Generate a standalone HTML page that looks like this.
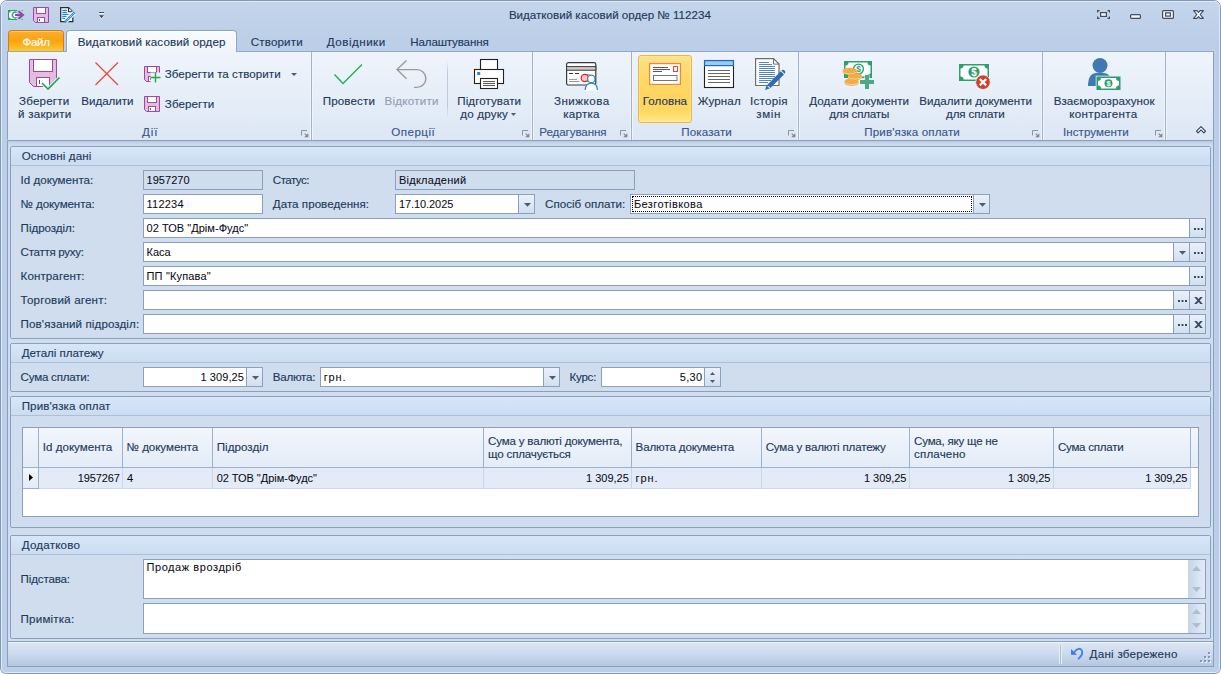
<!DOCTYPE html>
<html lang="uk">
<head>
<meta charset="utf-8">
<title>Видатковий касовий ордер № 112234</title>
<style>
*{box-sizing:border-box;margin:0;padding:0}
html,body{width:1221px;height:674px;overflow:hidden;background:#fff}
body{font-family:"Liberation Sans",sans-serif;font-size:11.6px;color:#1e395b;position:relative}
.win,.win *{position:absolute}
.win{left:0;top:0;width:1221px;height:674px;background:linear-gradient(#c4d5eb 0,#bccfe8 40px,#bccfe8 100%);border-radius:7px 7px 6px 6px;overflow:hidden}
.win:before{content:"";position:absolute;left:0;top:0;right:0;bottom:0;border:1px solid #8697b2;border-radius:7px 7px 6px 6px;z-index:5}
.win:after{content:"";position:absolute;left:1px;top:1px;right:1px;bottom:1px;border:1px solid #dfeaf7;border-radius:6px 6px 5px 5px;z-index:5}
.t{white-space:nowrap;line-height:14px;height:14px;-webkit-text-stroke:0.14px currentColor}
.c{text-align:center}
.r{text-align:right}
svg{overflow:visible}
#title{left:0;top:8px;width:1219px;text-align:center;color:#1e395b}
#filetab{left:8px;top:30px;width:56px;height:21px;border:1px solid #dc7a12;border-bottom:none;border-radius:4px 4px 0 0;background:linear-gradient(#f9b030 0%,#f8a311 45%,#fab51e 75%,#fdcb2c 100%);box-shadow:inset 0 1px 0 rgba(255,225,150,.6)}
#acttab{left:66px;top:30px;width:171px;height:22px;border:1px solid #8fa6c6;border-bottom:none;border-radius:4px 4px 0 0;background:linear-gradient(#f8fbfe,#f0f5fb);box-shadow:inset 1px 1px 0 #fff,inset -1px 0 0 #fff}
#ribbon{left:7px;top:51px;width:1207px;height:90px;border:1px solid #8ba0bc;border-top-color:#93a8c6;border-radius:0 0 2px 2px;background:linear-gradient(#eff4fb 0%,#e6eef8 50%,#dce7f4 100%)}
.gsep{top:52px;width:3px;height:88px;margin-left:-1px;background:linear-gradient(90deg,#f0f5fb 0,#f0f5fb 1px,#a0b3ce 1px,#a0b3ce 2px,#f0f5fb 2px,#f0f5fb 3px)}
.bsep{width:1px;background:linear-gradient(rgba(180,196,218,0),#bccbe0 20%,#bccbe0 80%,rgba(180,196,218,0))}
.gcap{color:#3a5590}
.dis{color:#929fb3}
.hot{border:1px solid #e8b84b;border-radius:3px;background:linear-gradient(#fde08a 0%,#fed969 30%,#ffd55f 65%,#ffd962 85%,#ffe88c 100%);box-shadow:inset 0 0 0 1px rgba(255,236,170,.5)}
#form{left:7px;top:141px;width:1207px;height:500px;background:linear-gradient(#b7c7de 0,#c6d5e9 2px,#cfddee 5px);border-left:1px solid #8ba0bc;border-right:1px solid #8ba0bc}
.grp{border:1px solid #8ba0bc;border-radius:2px;background:#cfddee}
.hd{left:0;top:0;right:0;height:19px;background:linear-gradient(#d8e6f8,#cbdcf1);border-bottom:1px solid #aebfd9}
.fld{border:1px solid #8ba0bc;background:#fff;color:#000}
.fld.ro{background:#cfddee}
.btn{top:0;bottom:0;border-left:1px solid #8ba0bc;background:linear-gradient(#eaf1fa,#d3dfef)}
#status{left:7px;top:641px;width:1207px;height:26px;border:1px solid #8ba0bc;background:linear-gradient(#dde8f5 0%,#cddbee 45%,#b5c7df 100%);box-shadow:inset 0 1px 0 #eef4fb}
.gh{top:0;height:40px;font-size:11px;border-right:1px solid #9db0cc;border-bottom:1px solid #9db0cc;background:linear-gradient(#f2f6fc,#e3ecf8);color:#1e395b}
.gc{top:40px;height:21px;border-right:1px solid #c9d6e8;border-bottom:1px solid #c9d6e8;background:#e2ebf7;color:#000}
.v{color:#0a0a14;-webkit-text-stroke:0.05px currentColor}
</style>
</head>
<body>
<div class="win">
<div class="t " style="left:508.9px;top:8px;letter-spacing:0.00px;">Видатковий касовий ордер № 112234</div>
<svg style="left:8px;top:10px" width="16" height="10" viewBox="0 0 16 10"><rect x="0" y="0" width="9.200" height="10" fill="#2f9e6e"/><path d="M1.100 2.600Q2.800 2.600 2.800 1.100H9.200V8.900H2.800Q2.800 7.400 1.100 7.400Z" fill="#fff"/><path d="M8.800 2.500A2.900 2.900 0 1 0 8.800 7.500" fill="none" stroke="#2f9e6e" stroke-width="1.400"/><rect x="13.500" y="0" width="1.200" height="1.200" fill="#2f9e6e" opacity="0.800"/><rect x="13.500" y="8.800" width="1.200" height="1.200" fill="#2f9e6e" opacity="0.800"/><path d="M7 5H13.500" stroke="#8e44ad" stroke-width="1.900"/><path d="M10.400 1.300L15 5L10.400 8.700" fill="none" stroke="#8e44ad" stroke-width="2"/></svg>
<svg style="left:33px;top:7px" width="16" height="16" viewBox="0 0 16 16"><path d="M0.5 0.5H15.5V15.5H2.5L0.5 13.5Z" fill="#e2bde0" stroke="#a046a3"/><rect x="3.5" y="0.5" width="9" height="6" fill="#fff" stroke="#a046a3"/><rect x="4.5" y="10.5" width="7" height="5" fill="#fff" stroke="#a046a3"/><rect x="6" y="12" width="1" height="2" fill="#555"/></svg>
<svg style="left:60px;top:7px" width="16" height="16" viewBox="0 0 16 16"><path d="M0.700 0.700H8.500L12.800 4.800V14.600H0.700Z" fill="#fff" stroke="#2b2b2b" stroke-width="1.250"/><path d="M8.500 0.700V4.800H12.800" fill="#e8e8e8" stroke="#2b2b2b" stroke-width="1.100"/><path d="M2.300 3.400H7M2.300 5.400H7M2.300 7.400H8.500M2.300 9.400H6.500M2.300 11.400H5" stroke="#1e88d2" stroke-width="1.100"/><path d="M14.500 5.500L5.600 14.400" stroke="#fff" stroke-width="4.400"/><path d="M14.600 5.400L5.800 14.200" stroke="#2e8fdb" stroke-width="2.500" fill="none"/><path d="M6.700 15.100L4.900 13.300L4.200 15.800Z" fill="#2e8fdb"/><path d="M13.800 6.200L6.200 13.800" stroke="#fff" stroke-width="0.800" stroke-dasharray="1.300 0.900"/></svg>
<svg style="left:99px;top:12px" width="5" height="8" viewBox="0 0 5 8"><rect x="0" y="0" width="5" height="1" fill="#4a4f58"/><rect x="0" y="1" width="5" height="1" fill="#fff" opacity="0.750"/><path d="M-0.300 4.100H5.300L2.500 7.200Z" fill="#fff" opacity="0.700"/><path d="M0 3.200H5L2.500 6.200Z" fill="#454a52"/></svg>
<svg style="left:1097px;top:10px" width="13" height="9" viewBox="0 0 13 9"><path d="M2.500 0.600H0.600V2.500M10.500 0.600H12.400V2.500M2.500 8.400H0.600V6.500M10.500 8.400H12.400V6.500" fill="none" stroke="#454b5e" stroke-width="1.200"/><rect x="3.600" y="2.600" width="5.800" height="3.800" fill="#f4f8fc" stroke="#454b5e" stroke-width="1.200"/></svg>
<svg style="left:1130px;top:14px" width="11" height="5" viewBox="0 0 11 5"><rect x="0.600" y="0.600" width="9.800" height="3.800" rx="1" fill="#f4f8fc" stroke="#454b5e" stroke-width="1.200"/></svg>
<svg style="left:1162px;top:10px" width="12" height="9" viewBox="0 0 12 9"><rect x="0.600" y="0.600" width="10.800" height="7.800" rx="1" fill="#f4f8fc" stroke="#454b5e" stroke-width="1.200"/><rect x="3.600" y="2.900" width="4.800" height="3.200" fill="#f4f8fc" stroke="#454b5e" stroke-width="1.200"/></svg>
<svg style="left:1193px;top:10px" width="11" height="9" viewBox="0 0 11 9"><path d="M0.600 0.600H4L5.500 2.500L7 0.600H10.400L7.200 4.500L10.400 8.400H7L5.500 6.500L4 8.400H0.600L3.800 4.500Z" fill="#f4f8fc" stroke="#454b5e" stroke-width="1.150" stroke-linejoin="round"/></svg>
<div id="filetab"></div>
<div class="t " style="left:22.5px;top:34.5px;letter-spacing:-0.33px;color:#fff">Файл</div>
<div id="ribbon"></div>
<div id="acttab"></div>
<div class="t " style="left:77.7px;top:35px;letter-spacing:0.11px;">Видатковий касовий ордер</div>
<div class="t " style="left:250.8px;top:35px;letter-spacing:0.14px;">Створити</div>
<div class="t " style="left:326.8px;top:35px;letter-spacing:0.50px;">Довідники</div>
<div class="t " style="left:410.3px;top:35px;letter-spacing:-0.16px;">Налаштування</div>
<div class="gsep" style="left:311px"></div>
<div class="gsep" style="left:532px"></div>
<div class="gsep" style="left:631px"></div>
<div class="gsep" style="left:798px"></div>
<div class="gsep" style="left:1042px"></div>
<div class="gsep" style="left:1165px"></div>
<div class="t gcap" style="left:142.1px;top:125px;letter-spacing:0.85px;">Дії</div>
<div class="t gcap" style="left:391.3px;top:125px;letter-spacing:0.45px;">Оперції</div>
<div class="t gcap" style="left:539.3px;top:125px;letter-spacing:-0.09px;">Редагування</div>
<div class="t gcap" style="left:681.3px;top:125px;letter-spacing:0.11px;">Показати</div>
<div class="t gcap" style="left:864.3px;top:125px;letter-spacing:0.12px;">Прив'язка оплати</div>
<div class="t gcap" style="left:1063.0px;top:125px;letter-spacing:0.05px;">Інструменти</div>
<svg style="left:301px;top:130px" width="8" height="8" viewBox="0 0 8 8"><path d="M0.500 5.500V0.500H6" fill="none" stroke="#8d93a3"/><path d="M7.300 3.200V7.300H3.200Z" fill="#808697"/><path d="M3.700 3.700L6 6" stroke="#808697" stroke-width="1.100"/></svg>
<svg style="left:522px;top:130px" width="8" height="8" viewBox="0 0 8 8"><path d="M0.500 5.500V0.500H6" fill="none" stroke="#8d93a3"/><path d="M7.300 3.200V7.300H3.200Z" fill="#808697"/><path d="M3.700 3.700L6 6" stroke="#808697" stroke-width="1.100"/></svg>
<svg style="left:620px;top:130px" width="8" height="8" viewBox="0 0 8 8"><path d="M0.500 5.500V0.500H6" fill="none" stroke="#8d93a3"/><path d="M7.300 3.200V7.300H3.200Z" fill="#808697"/><path d="M3.700 3.700L6 6" stroke="#808697" stroke-width="1.100"/></svg>
<svg style="left:788px;top:130px" width="8" height="8" viewBox="0 0 8 8"><path d="M0.500 5.500V0.500H6" fill="none" stroke="#8d93a3"/><path d="M7.300 3.200V7.300H3.200Z" fill="#808697"/><path d="M3.700 3.700L6 6" stroke="#808697" stroke-width="1.100"/></svg>
<svg style="left:1032px;top:130px" width="8" height="8" viewBox="0 0 8 8"><path d="M0.500 5.500V0.500H6" fill="none" stroke="#8d93a3"/><path d="M7.300 3.200V7.300H3.200Z" fill="#808697"/><path d="M3.700 3.700L6 6" stroke="#808697" stroke-width="1.100"/></svg>
<svg style="left:1155px;top:130px" width="8" height="8" viewBox="0 0 8 8"><path d="M0.500 5.500V0.500H6" fill="none" stroke="#8d93a3"/><path d="M7.300 3.200V7.300H3.200Z" fill="#808697"/><path d="M3.700 3.700L6 6" stroke="#808697" stroke-width="1.100"/></svg>
<svg style="left:1195.5px;top:125.5px" width="10" height="8" viewBox="0 0 10 8"><path d="M0.500 5.200L5 0.700L9.500 5.200L7.900 6.800L5 3.900L2.100 6.800Z" fill="#fff" stroke="#2c3e5c" stroke-width="1.100" stroke-linejoin="round"/></svg>
<svg style="left:29px;top:59px" width="28" height="28" viewBox="0 0 28 28"><path d="M0.5 0.5H27.5V27.5H4.5L0.5 23.5Z" fill="#e2bde0" stroke="#a046a3"/><rect x="4.5" y="0.5" width="19" height="12" fill="#fff" stroke="#a046a3"/><rect x="7.5" y="18.5" width="13" height="9" fill="#fff" stroke="#a046a3"/><rect x="10" y="21" width="1" height="4" fill="#555"/><path d="M15.500 26.500L19 30L30.500 18.500L31 24L28.500 29H20" fill="#e9f0f9" stroke="#e9f0f9" stroke-width="3.400" stroke-linejoin="round"/><path d="M13 24L19 30" fill="none" stroke="#f4f7fc" stroke-width="3.400"/><path d="M13 24L19 30L30.500 18.500" fill="none" stroke="#1fa84d" stroke-width="1.600"/></svg>
<div class="t " style="left:19.0px;top:94px;letter-spacing:0.19px;">Зберегти</div>
<div class="t " style="left:18.0px;top:107px;letter-spacing:0.26px;">й закрити</div>
<svg style="left:95px;top:62px" width="23" height="23" viewBox="0 0 23 23"><path d="M0.500 0.500L23 23M23 0.500L0.500 23" stroke="#e9453c" stroke-width="1.200" fill="none"/></svg>
<div class="t " style="left:81.3px;top:94px;letter-spacing:-0.03px;">Видалити</div>
<svg style="left:144px;top:66px" width="16" height="16" viewBox="0 0 16 16"><path d="M0.5 0.5H15.5V15.5H2.5L0.5 13.5Z" fill="#e2bde0" stroke="#a046a3"/><rect x="3.5" y="0.5" width="9" height="6" fill="#fff" stroke="#a046a3"/><rect x="4.5" y="10.5" width="7" height="5" fill="#fff" stroke="#a046a3"/><rect x="6" y="12" width="1" height="2" fill="#555"/><rect x="6.500" y="6.500" width="10" height="10" fill="#e9f0f9"/><path d="M11.500 6.500V16.500M6.500 11.500H16.500" stroke="#1fa84d" stroke-width="1.400"/></svg>
<div class="t " style="left:164.8px;top:67px;letter-spacing:0.03px;">Зберегти та створити</div>
<svg style="left:291px;top:73px" width="6" height="3" viewBox="0 0 6 3"><path d="M0 0H6L3 3Z" fill="#4a5b75"/></svg>
<svg style="left:144px;top:96px" width="16" height="16" viewBox="0 0 16 16"><path d="M0.5 0.5H15.5V15.5H2.5L0.5 13.5Z" fill="#e2bde0" stroke="#a046a3"/><rect x="3.5" y="0.5" width="9" height="6" fill="#fff" stroke="#a046a3"/><rect x="4.5" y="10.5" width="7" height="5" fill="#fff" stroke="#a046a3"/><rect x="6" y="12" width="1" height="2" fill="#555"/></svg>
<div class="t " style="left:164.8px;top:97px;letter-spacing:0.09px;">Зберегти</div>
<svg style="left:334px;top:64px" width="28" height="20" viewBox="0 0 28 20"><path d="M0.500 10.500L9 19.500L28 0.500" fill="none" stroke="#22b14c" stroke-width="1.400"/></svg>
<div class="t " style="left:322.7px;top:94px;letter-spacing:0.14px;">Провести</div>
<svg style="left:396px;top:60px" width="31" height="28" viewBox="0 0 31 28"><path d="M10.500 0.500L1 9.600L10.500 18.700M1 9.600H21A8.900 8.900 0 0 1 21 27.400H18" fill="none" stroke="#9b9b9b" stroke-width="1.400"/></svg>
<div class="t dis" style="left:384.6px;top:94px;letter-spacing:0.23px;">Відкотити</div>
<div class="bsep" style="left:447px;top:61px;height:57px"></div>
<svg style="left:474px;top:59px" width="30" height="30" viewBox="0 0 30 30"><rect x="6.500" y="0.500" width="17" height="11" fill="#fff" stroke="#222" stroke-width="1.100"/><rect x="0.500" y="10.500" width="29" height="14" fill="#fff" stroke="#222" stroke-width="1.100"/><rect x="6.500" y="19.500" width="17" height="10" fill="#fff" stroke="#222" stroke-width="1.100"/><path d="M9 22.500H21M9 24.500H21M9 26.500H21" stroke="#444" stroke-width="0.900"/><rect x="3.200" y="13" width="3" height="3" fill="#2e86c8"/></svg>
<div class="t " style="left:457.3px;top:94px;letter-spacing:0.06px;">Підготувати</div>
<div class="t " style="left:460.3px;top:107px;letter-spacing:0.18px;">до друку</div>
<svg style="left:511px;top:113px" width="5" height="3" viewBox="0 0 5 3"><path d="M0 0H5L2.500 3Z" fill="#4a5b75"/></svg>
<svg style="left:566px;top:62px" width="32" height="29" viewBox="0 0 32 29"><rect x="0.600" y="0.600" width="29.200" height="22.400" rx="1.800" fill="#fff" stroke="#3a3a3a" stroke-width="1.200"/><rect x="0.600" y="4.600" width="29.200" height="3.600" fill="#cfcdcb" stroke="#3a3a3a" stroke-width="1"/><path d="M3 11.500H7M9 11.500H13" stroke="#333" stroke-width="1.100"/><path d="M3 17.400H11M3 19.500H13" stroke="#888" stroke-width="0.900"/><circle cx="21.300" cy="16" r="3.500" fill="#fbe3c8" stroke="#ee8a2a" stroke-width="1.100"/><circle cx="18.800" cy="16" r="3.600" fill="#f6c6c6" stroke="#e0262d" stroke-width="1.200"/><path d="M18.800 28.500V27.500Q19.300 21 25.300 21Q31.300 21 31.800 27.500V28.500Z" fill="#fff"/><path d="M19.200 28Q19.500 21.200 25.300 21.200Q31.100 21.200 31.400 28" fill="none" stroke="#2a8ad4" stroke-width="1.250"/><circle cx="25.300" cy="16.900" r="3.700" fill="#fff" stroke="#2a8ad4" stroke-width="1.250"/></svg>
<div class="t " style="left:553.9px;top:94px;letter-spacing:0.50px;">Знижкова</div>
<div class="t " style="left:563.3px;top:107px;letter-spacing:0.22px;">картка</div>
<div class="hot" style="left:638px;top:55px;width:54px;height:68px"></div>
<svg style="left:649px;top:63px" width="32" height="22" viewBox="0 0 32 22"><rect x="0.600" y="0.600" width="30.800" height="20.800" fill="#fff" stroke="#f0853a" stroke-width="1.200"/><path d="M4 4.500H19M4 6.500H21M4 8.500H13" stroke="#444" stroke-width="0.900"/><rect x="24.500" y="3.500" width="4" height="5" fill="#fff" stroke="#e8413a" stroke-width="1"/><rect x="4.500" y="12.500" width="23.500" height="5" fill="#fff" stroke="#777" stroke-width="1"/></svg>
<div class="t " style="left:642.7px;top:94px;letter-spacing:0.05px;">Головна</div>
<svg style="left:704px;top:60px" width="30" height="28" viewBox="0 0 30 28"><rect x="0.500" y="0.500" width="29" height="27" fill="#fff" stroke="#222" stroke-width="1.100"/><rect x="0.600" y="0.600" width="28.800" height="5" fill="#9ccdf0" stroke="#1a6fc0" stroke-width="1.200"/><path d="M4 10.500H26M4 13.500H26M4 16.500H26M4 19.500H26M4 22.500H26" stroke="#555" stroke-width="0.900"/></svg>
<div class="t " style="left:697.7px;top:94px;letter-spacing:0.13px;">Журнал</div>
<svg style="left:755px;top:58px" width="31" height="33" viewBox="0 0 31 33"><path d="M0.600 0.600H18.500L24 6.100V27.500H0.600Z" fill="#fff" stroke="#6d6d6d" stroke-width="1.200"/><path d="M18.500 0.600V6.100H24" fill="none" stroke="#6d6d6d" stroke-width="1"/><path d="M4 4.500H14M4 6.500H17M4 8.500H20M4 10.500H20M4 12.500H20M4 14.500H20M4 16.500H20M4 18.500H20M4 20.500H20M4 22.500H16M4 24.500H13" stroke="#3b78c0" stroke-width="0.900"/><path d="M25.800 13.200L29 16.400L15.500 29.900L12.300 26.700Z" fill="#2e6db4"/><path d="M11.600 27.500L14.700 30.600L10 32Z" fill="#2e6db4"/><path d="M26.400 12.600A1.800 1.800 0 0 1 29.600 15.800Z" fill="#2e6db4"/></svg>
<div class="t " style="left:750.0px;top:94px;letter-spacing:0.28px;">Історія</div>
<div class="t " style="left:756.3px;top:107px;letter-spacing:0.63px;">змін</div>
<svg style="left:843px;top:60px" width="32" height="30" viewBox="0 0 32 30"><g transform="translate(1,1)"><rect x="0" y="0" width="28" height="17" fill="#2f9e6e"/><path d="M1.5 4.5Q4.5 4.5 4.5 1.5H23.5Q23.5 4.5 26.5 4.5V12.5Q23.5 12.5 23.5 15.5H4.5Q4.5 12.5 1.5 12.5Z" fill="#fff"/><circle cx="14.5" cy="8" r="4.8999999999999995" fill="#fff" stroke="#2f9e6e" stroke-width="1.400"/><text x="14.5" y="11.06" font-family="Liberation Sans,sans-serif" font-weight="bold" font-size="8.5" fill="#2f9e6e" text-anchor="middle">$</text></g><ellipse cx="8.6" cy="23.1" rx="7" ry="2.600" fill="#eda035"/><rect x="1.5999999999999996" y="21.6" width="14" height="1.500" fill="#eda035"/><path d="M1.7999999999999998 22.5A7 2.600 0 0 0 15.399999999999999 22.5" fill="none" stroke="#fff" stroke-width="0.700" opacity="0.900"/><ellipse cx="8.6" cy="21.0" rx="7" ry="2.500" fill="#f2ad47"/><ellipse cx="11.9" cy="17.7" rx="7" ry="2.600" fill="#eda035"/><rect x="4.9" y="16.2" width="14" height="1.500" fill="#eda035"/><path d="M5.1000000000000005 17.099999999999998A7 2.600 0 0 0 18.7 17.099999999999998" fill="none" stroke="#fff" stroke-width="0.700" opacity="0.900"/><ellipse cx="11.9" cy="15.6" rx="7" ry="2.500" fill="#f2ad47"/><ellipse cx="6.8" cy="12.4" rx="7" ry="2.600" fill="#eda035"/><rect x="-0.20000000000000018" y="10.9" width="14" height="1.500" fill="#eda035"/><path d="M0.0 11.8A7 2.600 0 0 0 13.6 11.8" fill="none" stroke="#fff" stroke-width="0.700" opacity="0.900"/><ellipse cx="6.8" cy="10.3" rx="7" ry="2.500" fill="#f2ad47"/><path d="M21.500 14.500H26.500V19.500H31.500V24.500H26.500V29.500H21.500V24.500H16.500V19.500H21.500Z" fill="#eaf1f9"/><path d="M22 15H26V20H31V24H26V29H22V24H17V20H22Z" fill="#4aab82"/></svg>
<div class="t " style="left:809.3px;top:94px;letter-spacing:0.06px;">Додати документи</div>
<div class="t " style="left:829.3px;top:107px;letter-spacing:-0.19px;">для сплаты</div>
<svg style="left:959px;top:64px" width="32" height="26" viewBox="0 0 32 26"><rect x="0" y="0" width="30" height="17" fill="#2f9e6e"/><path d="M1.5 4.5Q4.5 4.5 4.5 1.5H25.5Q25.5 4.5 28.5 4.5V12.5Q25.5 12.5 25.5 15.5H4.5Q4.5 12.5 1.5 12.5Z" fill="#fff"/><circle cx="15" cy="8" r="5.6" fill="#2f9e6e"/><text x="15" y="11.6" font-family="Liberation Sans,sans-serif" font-weight="bold" font-size="10" fill="#fff" text-anchor="middle">$</text><circle cx="24" cy="18.200" r="7.300" fill="#d0402b" stroke="#e9f0f9" stroke-width="0.800"/><path d="M20.800 15L27.200 21.400M27.200 15L20.800 21.400" stroke="#fff" stroke-width="2.200"/></svg>
<div class="t " style="left:919.3px;top:94px;letter-spacing:0.02px;">Видалити документи</div>
<div class="t " style="left:946.1px;top:107px;letter-spacing:-0.14px;">для сплати</div>
<svg style="left:1088px;top:58px" width="33" height="33" viewBox="0 0 33 33"><circle cx="12" cy="7.500" r="7.500" fill="#3f78b5"/><path d="M0 28Q0 15 9 15H15Q24 15 24 28Z" fill="#3f78b5"/><g transform="translate(8.500,18.500)"><rect x="-0.800" y="-0.800" width="25.600" height="15.100" fill="#e3ecf7"/><rect x="0" y="0" width="24" height="13.5" fill="#2f9e6e"/><path d="M1.5 4.5Q4.5 4.5 4.5 1.5H19.5Q19.5 4.5 22.5 4.5V9.0Q19.5 9.0 19.5 12.0H4.5Q4.5 9.0 1.5 9.0Z" fill="#fff"/><circle cx="12" cy="6.75" r="4" fill="#2f9e6e"/><text x="12" y="9.45" font-family="Liberation Sans,sans-serif" font-weight="bold" font-size="7.5" fill="#fff" text-anchor="middle">$</text></g></svg>
<div class="t " style="left:1053.7px;top:94px;letter-spacing:0.04px;">Взаєморозрахунок</div>
<div class="t " style="left:1069.3px;top:107px;letter-spacing:0.32px;">контрагента</div>
<div id="form"></div>
<div class="grp" style="left:10px;top:146px;width:1201px;height:193px"><div class="hd"></div></div>
<div class="t " style="left:21.7px;top:149px;letter-spacing:0.14px;">Основні дані</div>
<div class="t " style="left:20.6px;top:173px;letter-spacing:0.00px;">Id документа:</div>
<div class="t " style="left:20.6px;top:197px;letter-spacing:-0.11px;">№ документа:</div>
<div class="t " style="left:20.6px;top:221px;letter-spacing:-0.04px;">Підрозділ:</div>
<div class="t " style="left:20.6px;top:245px;letter-spacing:-0.31px;">Стаття руху:</div>
<div class="t " style="left:20.6px;top:269px;letter-spacing:0.08px;">Контрагент:</div>
<div class="t " style="left:20.6px;top:293px;letter-spacing:0.19px;">Торговий агент:</div>
<div class="t " style="left:20.6px;top:317px;letter-spacing:0.10px;">Пов'язаний підрозділ:</div>
<div class="fld ro" style="left:143px;top:170px;width:120px;height:20px"></div>
<div class="t v" style="left:146.5px;top:173px;letter-spacing:0.04px;font-size:11px;">1957270</div>
<div class="t " style="left:272.8px;top:173px;letter-spacing:-0.53px;">Статус:</div>
<div class="fld ro" style="left:395px;top:170px;width:240px;height:20px"></div>
<div class="t v" style="left:398.9px;top:173px;letter-spacing:0.27px;font-size:11px;">Відкладений</div>
<div class="fld" style="left:143px;top:194px;width:120px;height:20px"></div>
<div class="t v" style="left:146.5px;top:197px;letter-spacing:0.23px;font-size:11px;">112234</div>
<div class="t " style="left:272.8px;top:197px;letter-spacing:0.03px;">Дата проведення:</div>
<div class="fld" style="left:395px;top:194px;width:140px;height:20px"><div class="btn" style="left:122px;width:16px"><svg style="left:5px;top:8px" width="7" height="4" viewBox="0 0 7 4"><path d="M0 0H7L3.500 3.800Z" fill="#4a5b75"/></svg></div></div>
<div class="t v" style="left:398.9px;top:197px;letter-spacing:-0.07px;font-size:11px;">17.10.2025</div>
<div class="t " style="left:545.1px;top:197px;letter-spacing:0.01px;">Спосіб оплати:</div>
<div class="fld" style="left:630px;top:194px;width:360px;height:20px"><div class="btn" style="left:342px;width:16px"><svg style="left:5px;top:8px" width="7" height="4" viewBox="0 0 7 4"><path d="M0 0H7L3.500 3.800Z" fill="#4a5b75"/></svg></div><div style="left:1px;top:1px;width:340px;height:16px;border:1px dotted #000"></div></div>
<div class="t v" style="left:633.9px;top:197px;letter-spacing:0.40px;font-size:11px;">Безготівкова</div>
<div class="fld" style="left:143px;top:218px;width:1063px;height:20px"><div class="btn" style="left:1045px;width:16px"><svg style="left:4px;top:9px" width="9" height="2" viewBox="0 0 9 2"><path d="M0 0H2V2H0ZM3.500 0H5.500V2H3.500ZM7 0H9V2H7Z" fill="#3a4a66"/></svg></div></div>
<div class="t v" style="left:146.5px;top:221px;letter-spacing:0.04px;font-size:11px;">02 ТОВ "Дрім-Фудс"</div>
<div class="fld" style="left:143px;top:242px;width:1063px;height:20px"><div class="btn" style="left:1045px;width:16px"><svg style="left:4px;top:9px" width="9" height="2" viewBox="0 0 9 2"><path d="M0 0H2V2H0ZM3.500 0H5.500V2H3.500ZM7 0H9V2H7Z" fill="#3a4a66"/></svg></div><div class="btn" style="left:1029px;width:16px"><svg style="left:5px;top:8px" width="7" height="4" viewBox="0 0 7 4"><path d="M0 0H7L3.500 3.800Z" fill="#4a5b75"/></svg></div></div>
<div class="t v" style="left:146.5px;top:245px;letter-spacing:0.01px;font-size:11px;">Каса</div>
<div class="fld" style="left:143px;top:266px;width:1063px;height:20px"><div class="btn" style="left:1045px;width:16px"><svg style="left:4px;top:9px" width="9" height="2" viewBox="0 0 9 2"><path d="M0 0H2V2H0ZM3.500 0H5.500V2H3.500ZM7 0H9V2H7Z" fill="#3a4a66"/></svg></div></div>
<div class="t v" style="left:146.5px;top:269px;letter-spacing:0.17px;font-size:11px;">ПП "Купава"</div>
<div class="fld" style="left:143px;top:290px;width:1063px;height:20px"><div class="btn" style="left:1045px;width:16px"><svg style="left:4px;top:6px" width="9" height="7" viewBox="0 0 9 7"><path d="M0.200 0H2.700L4.500 2.100L6.300 0H8.800L5.700 3.500L8.800 7H6.300L4.500 4.900L2.700 7H0.200L3.300 3.500Z" fill="#3a4a66"/></svg></div><div class="btn" style="left:1029px;width:16px"><svg style="left:4px;top:9px" width="9" height="2" viewBox="0 0 9 2"><path d="M0 0H2V2H0ZM3.500 0H5.500V2H3.500ZM7 0H9V2H7Z" fill="#3a4a66"/></svg></div></div>
<div class="fld" style="left:143px;top:314px;width:1063px;height:20px"><div class="btn" style="left:1045px;width:16px"><svg style="left:4px;top:6px" width="9" height="7" viewBox="0 0 9 7"><path d="M0.200 0H2.700L4.500 2.100L6.300 0H8.800L5.700 3.500L8.800 7H6.300L4.500 4.900L2.700 7H0.200L3.300 3.500Z" fill="#3a4a66"/></svg></div><div class="btn" style="left:1029px;width:16px"><svg style="left:4px;top:9px" width="9" height="2" viewBox="0 0 9 2"><path d="M0 0H2V2H0ZM3.500 0H5.500V2H3.500ZM7 0H9V2H7Z" fill="#3a4a66"/></svg></div></div>
<div class="grp" style="left:10px;top:343px;width:1201px;height:49px"><div class="hd"></div></div>
<div class="t " style="left:21.7px;top:346px;letter-spacing:-0.05px;">Деталі платежу</div>
<div class="t " style="left:20.6px;top:370px;letter-spacing:-0.24px;">Сума сплати:</div>
<div class="fld" style="left:143px;top:367px;width:120px;height:20px"><div class="btn" style="left:102px;width:16px"><svg style="left:5px;top:8px" width="7" height="4" viewBox="0 0 7 4"><path d="M0 0H7L3.500 3.800Z" fill="#4a5b75"/></svg></div></div>
<div class="t v" style="left:200.5px;top:370px;letter-spacing:0.09px;font-size:11px;">1 309,25</div>
<div class="t " style="left:272.8px;top:370px;letter-spacing:-0.28px;">Валюта:</div>
<div class="fld" style="left:320px;top:367px;width:240px;height:20px"><div class="btn" style="left:222px;width:16px"><svg style="left:5px;top:8px" width="7" height="4" viewBox="0 0 7 4"><path d="M0 0H7L3.500 3.800Z" fill="#4a5b75"/></svg></div></div>
<div class="t v" style="left:323.7px;top:370px;letter-spacing:0.90px;font-size:11px;">грн.</div>
<div class="t " style="left:569.6px;top:370px;letter-spacing:-0.28px;">Курс:</div>
<div class="fld" style="left:601px;top:367px;width:120px;height:20px"><div class="btn" style="left:102px;width:16px"><svg style="left:5px;top:4px" width="5" height="3" viewBox="0 0 5 3"><path d="M0 3H5L2.500 0Z" fill="#4a5b75"/></svg><svg style="left:5px;top:12px" width="5" height="3" viewBox="0 0 5 3"><path d="M0 0H5L2.500 3Z" fill="#4a5b75"/></svg></div></div>
<div class="t v" style="left:679.7px;top:370px;letter-spacing:0.32px;font-size:11px;">5,30</div>
<div class="grp" style="left:10px;top:396px;width:1201px;height:132px"><div class="hd"></div></div>
<div class="t " style="left:21.7px;top:399px;letter-spacing:0.10px;">Прив'язка оплат</div>
<div class="fld" style="left:22px;top:427px;width:1177px;height:90px">
<div class="gh" style="left:0px;width:16px"></div>
<div class="gc" style="left:0;width:16px;background:linear-gradient(#f2f6fc,#e3ecf8);border-right:1px solid #9db0cc;border-bottom:1px solid #9db0cc"><svg style="left:6px;top:6px" width="4" height="7" viewBox="0 0 4 7"><path d="M0 0L4 3.500L0 7Z" fill="#000"/></svg></div>
<div class="gh" style="left:16px;width:84px"></div>
<div class="gc" style="left:16px;width:84px"></div>
<div class="gh" style="left:100px;width:90px"></div>
<div class="gc" style="left:100px;width:90px"></div>
<div class="gh" style="left:190px;width:271px"></div>
<div class="gc" style="left:190px;width:271px"></div>
<div class="gh" style="left:461px;width:148px"></div>
<div class="gc" style="left:461px;width:148px"></div>
<div class="gh" style="left:609px;width:130px"></div>
<div class="gc" style="left:609px;width:130px"></div>
<div class="gh" style="left:739px;width:148px"></div>
<div class="gc" style="left:739px;width:148px"></div>
<div class="gh" style="left:887px;width:144px"></div>
<div class="gc" style="left:887px;width:144px"></div>
<div class="gh" style="left:1031px;width:137px"></div>
<div class="gc" style="left:1031px;width:137px"></div>
<div class="gh" style="left:1168px;width:7px;border-right:none"></div>
</div>
<div class="t " style="left:42.8px;top:439.5px;letter-spacing:0.00px;">Id документа</div>
<div class="t " style="left:126.6px;top:439.5px;letter-spacing:-0.06px;">№ документа</div>
<div class="t " style="left:216.7px;top:439.5px;letter-spacing:0.04px;">Підрозділ</div>
<div class="t " style="left:488.1px;top:433.8px;letter-spacing:-0.21px;">Сума у валюті документа,</div>
<div class="t " style="left:488.1px;top:446.9px;letter-spacing:-0.20px;">що сплачується</div>
<div class="t " style="left:635.6px;top:439.5px;letter-spacing:-0.15px;">Валюта документа</div>
<div class="t " style="left:765.7px;top:439.5px;letter-spacing:-0.19px;">Сума у валюті платежу</div>
<div class="t " style="left:914.1px;top:433.8px;letter-spacing:-0.25px;">Сума, яку ще не</div>
<div class="t " style="left:914.1px;top:446.9px;letter-spacing:0.14px;">сплачено</div>
<div class="t " style="left:1057.9px;top:439.5px;letter-spacing:-0.27px;">Сума сплати</div>
<div class="t v" style="left:77.7px;top:471px;letter-spacing:-0.10px;font-size:11px;">1957267</div>
<div class="t v" style="left:126.9px;top:471px;letter-spacing:0.90px;font-size:11px;">4</div>
<div class="t v" style="left:216.7px;top:471px;letter-spacing:-0.04px;font-size:11px;">02 ТОВ "Дрім-Фудс"</div>
<div class="t v" style="left:586.1px;top:471px;letter-spacing:-0.01px;font-size:11px;">1 309,25</div>
<div class="t v" style="left:635.6px;top:471px;letter-spacing:0.88px;font-size:11px;">грн.</div>
<div class="t v" style="left:864.1px;top:471px;letter-spacing:-0.08px;font-size:11px;">1 309,25</div>
<div class="t v" style="left:1007.9px;top:471px;letter-spacing:-0.04px;font-size:11px;">1 309,25</div>
<div class="t v" style="left:1145.2px;top:471px;letter-spacing:-0.09px;font-size:11px;">1 309,25</div>
<div class="grp" style="left:10px;top:535px;width:1201px;height:104px"><div class="hd"></div></div>
<div class="t " style="left:21.7px;top:538px;letter-spacing:0.21px;">Додатково</div>
<div class="t " style="left:20.6px;top:572px;letter-spacing:-0.17px;">Підстава:</div>
<div class="t " style="left:20.6px;top:612px;letter-spacing:0.18px;">Примітка:</div>
<div class="fld" style="left:143px;top:559px;width:1063px;height:40px"><div class="t" style="left:3px;top:1px"></div><div class="btn" style="left:1044px;width:17px;border-left:none;background:linear-gradient(90deg,#c6d4e7,#dce6f3 70%,#e0e9f5)"><svg style="left:4px;top:6px" width="9" height="5" viewBox="0 0 9 5"><path d="M0 5H9L4.500 0Z" fill="#aebdd3"/></svg><svg style="left:4px;top:27px" width="9" height="5" viewBox="0 0 9 5"><path d="M0 0H9L4.500 5Z" fill="#aebdd3"/></svg></div></div>
<div class="t v" style="left:146.5px;top:560px;letter-spacing:0.57px;font-size:11px;">Продаж вроздріб</div>
<div class="fld" style="left:143px;top:603px;width:1063px;height:31px"><div class="t" style="left:3px;top:1px"></div><div class="btn" style="left:1044px;width:17px;border-left:none;background:linear-gradient(90deg,#c6d4e7,#dce6f3 70%,#e0e9f5)"><svg style="left:4px;top:5px" width="9" height="5" viewBox="0 0 9 5"><path d="M0 5H9L4.500 0Z" fill="#aebdd3"/></svg><svg style="left:4px;top:19px" width="9" height="5" viewBox="0 0 9 5"><path d="M0 0H9L4.500 5Z" fill="#aebdd3"/></svg></div></div>
<div id="status"></div>
<div style="left:1059px;top:645px;width:3px;height:19px;background:linear-gradient(90deg,#e6eef8 0,#e6eef8 1px,#adbdd5 1px,#adbdd5 2px,#e6eef8 2px,#e6eef8 3px)"></div>
<svg style="left:1070px;top:647px" width="14" height="13" viewBox="0 0 14 13"><path d="M1 2.100V7.700H7Z" fill="#3f76e0"/><path d="M4.800 4.600C6.800 1.300 10.800 0.800 12 3.800C12.900 6.500 11.300 9.300 8.600 11.600" fill="none" stroke="#4a80e4" stroke-width="1.900" stroke-linecap="round"/></svg>
<div class="t " style="left:1089.6px;top:647px;letter-spacing:0.26px;">Дані збережено</div>
<svg style="left:1200px;top:652px" width="11" height="11" viewBox="0 0 11 11"><path d="M9 1H11V3H9ZM5 5H7V7H5ZM9 5H11V7H9ZM1 9H3V11H1ZM5 9H7V11H5ZM9 9H11V11H9Z" fill="#e6eef8"/><path d="M8 0H10V2H8ZM4 4H6V6H4ZM8 4H10V6H8ZM0 8H2V10H0ZM4 8H6V10H4ZM8 8H10V10H8Z" fill="#7f97b9"/></svg>
</div>
</body>
</html>
